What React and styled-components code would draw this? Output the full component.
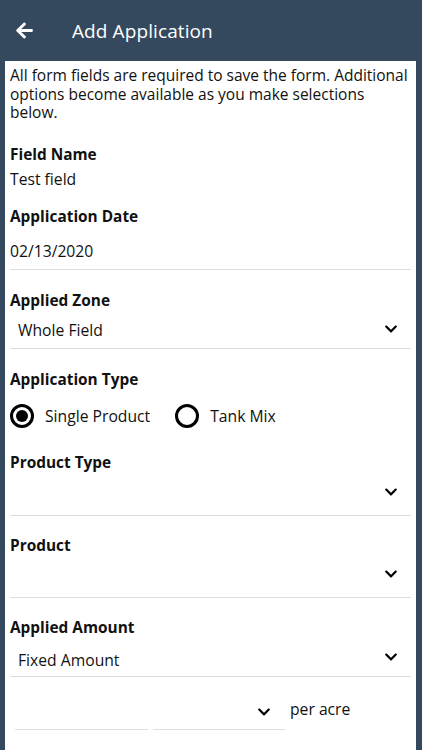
import React from 'react';
import styled, { createGlobalStyle } from 'styled-components';
import { FaArrowLeft, FaChevronDown } from 'react-icons/fa';

const GlobalStyle = createGlobalStyle`
    html, body {
        margin: 0;
        padding: 0;
        background: #34495e;
    }
    body {
        font-family: "Open Sans", "Noto Sans", sans-serif;
        color: #111;
    }
`;

const Screen = styled.div`
    width: 422px;
    min-height: 750px;
    background: #34495e;
    display: flex;
    flex-direction: column;
`;

const TopBar = styled.header`
    height: 61px;
    display: flex;
    align-items: center;
    padding-left: 15px;
    color: #fff;
    box-sizing: border-box;
    h1 {
        margin: 0 0 0 38px;
        font-size: 19px;
        font-weight: 400;
        letter-spacing: 0.1px;
    }
`;

const Card = styled.main`
    background: #fff;
    margin: 0 6px 0 5px;
    padding: 5px 5px 20px 5px;
    flex: 1;
`;

const Intro = styled.p`
    margin: 0;
    font-size: 15.5px;
    line-height: 18.5px;
`;

const Label = styled.div`
    font-weight: 700;
    font-size: 15.4px;
    line-height: 20px;
    margin-top: ${p => p.top}px;
`;

const Value = styled.div`
    font-size: 15.7px;
    line-height: 20px;
    margin-top: 4px;
`;

const Input = styled.div`
    height: 36px;
    margin-top: 6px;
    display: flex;
    align-items: center;
    font-size: 15.7px;
    border-bottom: 1.5px solid #dedede;
`;

const Select = styled.div`
    height: ${p => p.h}px;
    display: flex;
    align-items: flex-end;
    justify-content: space-between;
    padding: 0 13px ${p => p.bottom || 8}px 8px;
    box-sizing: border-box;
    font-size: 15.7px;
    line-height: 20px;
    border-bottom: 1.5px solid #dedede;
    svg {
        margin-bottom: ${p => p.iconLift}px;
    }
`;

const RadioRow = styled.div`
    display: flex;
    align-items: center;
    height: 30px;
    margin-top: 11px;
`;

const RadioOption = styled.label`
    display: flex;
    align-items: center;
    gap: 11px;
    font-size: 15.7px;
    margin-right: 25px;
`;

const RadioCircle = styled.span`
    width: 24px;
    height: 24px;
    box-sizing: border-box;
    border: 3px solid #000;
    border-radius: 50%;
    display: flex;
    align-items: center;
    justify-content: center;
    &::after {
        content: '';
        width: 12px;
        height: 12px;
        border-radius: 50%;
        background: ${p => (p.checked ? '#000' : 'transparent')};
    }
`;

const AmountRow = styled.div`
    display: flex;
    align-items: flex-end;
    margin-top: 16px;
    padding-left: 5px;
    gap: 5px;
`;

const AmountInput = styled.div`
    width: 133px;
    height: 36px;
    border-bottom: 1.5px solid #dedede;
`;

const UnitSelect = styled.div`
    width: 132px;
    height: 36px;
    border-bottom: 1.5px solid #dedede;
    display: flex;
    justify-content: flex-end;
    align-items: flex-start;
    padding: 11px 14px 0 0;
    box-sizing: border-box;
`;

const PerAcre = styled.span`
    font-size: 15.7px;
    align-self: flex-start;
    line-height: 20px;
    padding-top: 6px;
`;

const Chevron = () => <FaChevronDown size={14} color="#000" />;

export default function App() {
    return (
        <>
            <GlobalStyle />
            <Screen>
                <TopBar>
                    <FaArrowLeft size={19} />
                    <h1>Add Application</h1>
                </TopBar>
                <Card>
                    <Intro>
                        All form fields are required to save the form. Additional options become available as you make selections below.
                    </Intro>

                    <Label top={23}>Field Name</Label>
                    <Value>Test field</Value>

                    <Label top={18}>Application Date</Label>
                    <Input>02/13/2020</Input>

                    <Label top={21}>Applied Zone</Label>
                    <Select h={38} iconLift={4}>
                        <span>Whole Field</span>
                        <Chevron />
                    </Select>

                    <Label top={21}>Application Type</Label>
                    <RadioRow>
                        <RadioOption>
                            <RadioCircle checked />
                            Single Product
                        </RadioOption>
                        <RadioOption>
                            <RadioCircle />
                            Tank Mix
                        </RadioOption>
                    </RadioRow>

                    <Label top={22}>Product Type</Label>
                    <Select h={43} iconLift={8}>
                        <span></span>
                        <Chevron />
                    </Select>

                    <Label top={20}>Product</Label>
                    <Select h={42} iconLift={8}>
                        <span></span>
                        <Chevron />
                    </Select>

                    <Label top={20}>Applied Amount</Label>
                    <Select h={39} iconLift={6} bottom={6}>
                        <span>Fixed Amount</span>
                        <Chevron />
                    </Select>

                    <AmountRow>
                        <AmountInput />
                        <UnitSelect>
                            <Chevron />
                        </UnitSelect>
                        <PerAcre>per acre</PerAcre>
                    </AmountRow>
                </Card>
            </Screen>
        </>
    );
}
